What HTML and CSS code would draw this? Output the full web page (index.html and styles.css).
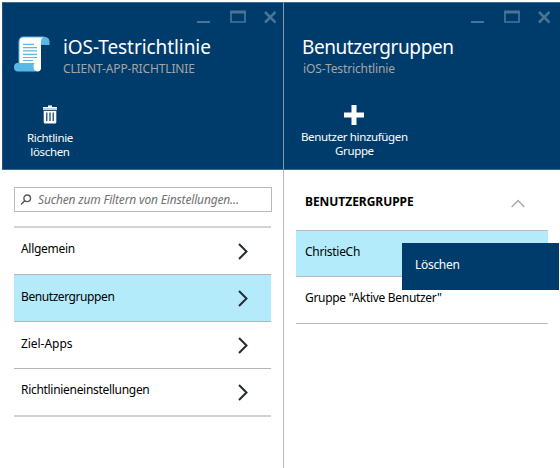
FILE: index.html
```html
<!DOCTYPE html>
<html lang="de">
<head>
<meta charset="utf-8">
<title>iOS-Testrichtlinie</title>
<link rel="stylesheet" href="styles.css">
</head>
<body>
<main class="blades">
  <section class="blade blade-policy">
    <header class="head">
      <div class="controls">
        <svg width="79" height="14" viewBox="0 0 79 14"><path d="M0 12h13" stroke-width="2"/><path d="M34 2.2h14v9.8h-14z" stroke-width="1.7"/><path d="M33.2 2h15.6" stroke-width="3"/><path d="M68 2l10.500 10.500M78.500 2l-10.500 10.500" stroke-width="2.500"/></svg>
      </div>
      <div class="identity">
        <svg class="scroll" width="36" height="36" viewBox="0 0 36 36">
          <path d="M9 1h21c4 0 5.500 2 5.500 5v3h-7L10 6z" fill="#59b9e6"/>
          <path d="M5 27V6c0-3.500 1.500-5 4.500-5H30c-2.200.7-3 2.500-3 5v25c0 3-1.500 4.500-3.500 4.500L18 29z" fill="#fff"/>
          <path d="M5 27V6c0-3.500 1.500-5 4.500-5H30" fill="none" stroke="#59b9e6" stroke-width="1"/>
          <path d="M3.500 27H21c-1.500 1-1.700 2.500-1.200 4 .5 2.700 2 4.200 4 4.500H4C1.200 35.500 0 33.500 0 31.200S1.200 27 3.500 27z" fill="#59b9e6"/>
          <circle cx="23.300" cy="31.500" r="3.700" fill="#fff"/>
          <path d="M9 8.300h11M9 11.700h14M9 14.900h14M9 18.300h14M9 21.500h14M9 24.500h10" stroke="#59b9e6" stroke-width="1.200"/>
        </svg>
        <div>
          <h1 class="title title-policy">iOS-Testrichtlinie</h1>
          <p class="subtitle sub-policy">CLIENT-APP-RICHTLINIE</p>
        </div>
      </div>
      <div class="command">
        <svg width="14" height="19" viewBox="0 0 14 19"><path d="M5 1.200h4" stroke="#fff" stroke-width="1.500"/><path d="M0 2h14v3.200H0z" fill="#c3d0dc"/><path d="M0 2.500h14" stroke="#fff"/><path d="M.7 6h12.600v11.200q0 1.300-1.300 1.300H2q-1.300 0-1.300-1.300z" fill="#fff"/><path d="M3.800 7.500v8.500M7 7.500v8.500M10.200 7.500v8.500" stroke="#003c6b" stroke-width="1.200"/></svg>
        <span class="command-label">Richtlinie<br>löschen</span>
      </div>
    </header>
    <div class="search">
      <svg width="12" height="12" viewBox="0 0 12 12"><circle cx="7.200" cy="4.300" r="3.300"/><path d="M4.700 6.700L1 10.500"/></svg>
      <span class="placeholder">Suchen zum Filtern von Einstellungen...</span>
    </div>
    <ul class="settings">
      <li><span class="general">Allgemein</span><svg width="10" height="17" viewBox="0 0 10 17"><path d="M1 1l7.500 7.500L1 16"/></svg></li>
      <li class="selected"><span class="user-groups">Benutzergruppen</span><svg width="10" height="17" viewBox="0 0 10 17"><path d="M1 1l7.500 7.500L1 16"/></svg></li>
      <li><span class="target-apps">Ziel-Apps</span><svg width="10" height="17" viewBox="0 0 10 17"><path d="M1 1l7.500 7.500L1 16"/></svg></li>
      <li class="last"><span>Richtlinieneinstellungen</span><svg width="10" height="17" viewBox="0 0 10 17"><path d="M1 1l7.500 7.500L1 16"/></svg></li>
    </ul>
  </section>
  <section class="blade blade-groups">
    <header class="head">
      <div class="controls">
        <svg width="79" height="14" viewBox="0 0 79 14"><path d="M0 12h13" stroke-width="2"/><path d="M34 2.200h14v9.800h-14z" stroke-width="1.700"/><path d="M33.200 2h15.600" stroke-width="3"/><path d="M68 2l10.500 10.500M78.500 2l-10.500 10.500" stroke-width="2.500"/></svg>
      </div>
      <div class="identity">
        <div>
          <h2 class="title title-groups">Benutzergruppen</h2>
          <p class="subtitle sub-groups">iOS-Testrichtlinie</p>
        </div>
      </div>
      <div class="command">
        <svg width="20" height="20" viewBox="0 0 20 20"><path d="M10 0v20M0 10h20" stroke="#fff" stroke-width="5"/></svg>
        <span class="command-label">Benutzer hinzufügen<br>Gruppe</span>
      </div>
    </header>
    <div class="group-heading">
      <span>BENUTZERGRUPPE</span>
      <svg width="14" height="9" viewBox="0 0 14 9"><path d="M.7 8L7 1.500 13.300 8"/></svg>
    </div>
    <ul class="groups">
      <li class="selected"><span>ChristieCh</span><div class="menu">Löschen</div></li>
      <li><span>Gruppe "Aktive Benutzer"</span></li>
    </ul>
  </section>
</main>
</body>
</html>
```
FILE: styles.css
```css
* { box-sizing: border-box; }
body {
  margin: 0;
  background: #fff;
  color: #000;
  font: 12px/16px "Noto Sans", "Open Sans", sans-serif;
}
h1, h2, p, ul { margin: 0; padding: 0; }
ul { list-style: none; }
svg { display: block; flex: none; }
.blades {
  display: grid;
  grid-template-columns: 282px 276px;
  width: 560px;
  height: 468px;
  padding: 2px 0 0 2px;
  overflow: hidden;
}
.blade-policy { border-right: 1px solid #b9bbbd; }
.head {
  height: 168px;
  background: #003c6b;
  border-top: 1px solid #3d6b92;
  border-bottom: 1px solid #3d6b92;
}
.blade-policy .head {
  border-left: 1px solid #24557e;
  width: 282px;
  border-right: 1px solid #8299b0;
}
.controls {
  display: flex;
  justify-content: flex-end;
  height: 31px;
  padding: 7px 7px 0 0;
}
.blade-groups .controls { padding-right: 10px; }
.controls svg { fill: none; stroke: #4b7396; }
.identity {
  display: flex;
  height: 54px;
  padding-left: 11px;
}
.blade-groups .identity { padding-left: 18px; }
.scroll { margin: 2px 13px 0 0; }
.title {
  height: 27px;
  color: #fff;
  font-size: 19px;
  font-weight: 400;
  line-height: 26px;
  white-space: nowrap;
}
.title-policy { letter-spacing: -0.07px; }
.title-groups { letter-spacing: -0.42px; }
.subtitle { color: #a5a5a5; white-space: nowrap; }
.sub-policy { letter-spacing: -0.14px; }
.sub-groups { padding-left: 1px; letter-spacing: -0.12px; }
.command {
  display: flex;
  flex-direction: column;
  align-items: center;
  width: max-content;
  margin: 17px 0 0 24px;
  color: #fff;
  font-size: 11.5px;
  line-height: 14px;
  text-align: center;
}
.blade-groups .command { margin: 17px 0 0 17px; }
.command-label {
  margin-top: 7px;
  letter-spacing: -0.35px;
  white-space: nowrap;
}
.blade-groups .command-label { margin-top: 5px; }
.search {
  display: flex;
  align-items: center;
  width: 258px;
  height: 25px;
  margin: 17px 0 14px 12px;
  padding-left: 5px;
  border: 1px solid #b9bcbf;
}
.search svg { fill: none; stroke: #555; stroke-width: 1.4; }
.placeholder {
  margin-left: 6px;
  color: #707070;
  font-style: italic;
  letter-spacing: -0.16px;
  white-space: nowrap;
}
.settings {
  width: 257px;
  margin-left: 12px;
  border-top: 2px solid #d2d2d2;
}
.settings li {
  display: flex;
  justify-content: space-between;
  height: 47px;
  padding: 13px 23px 0 7px;
  border-bottom: 1px solid #b2b5b8;
  letter-spacing: -0.3px;
}
.settings svg {
  margin-top: 2px;
  fill: none;
  stroke: #252b30;
  stroke-width: 2;
}
.settings .selected { background: #b3ebfb; }
.settings .last { height: 48px; border-bottom: 2px solid #d2d2d2; }
.user-groups { padding-top: 1px; letter-spacing: -0.42px; }
.target-apps { padding-top: 1px; letter-spacing: -0.05px; }
.group-heading {
  display: flex;
  justify-content: space-between;
  height: 60px;
  margin-left: 12px;
  padding: 24px 35px 0 9px;
  font-weight: 700;
  letter-spacing: -0.04px;
}
.group-heading svg {
  margin-top: 5px;
  fill: none;
  stroke: #aaa;
  stroke-width: 1.5;
}
.groups {
  width: 252px;
  margin-left: 12px;
  border-top: 1px solid #b9bcbf;
  letter-spacing: -0.3px;
}
.groups li {
  position: relative;
  height: 46px;
  padding: 13px 0 0 9px;
  border-bottom: 1px solid #b9bcbf;
}
.groups li:last-child { height: 47px; }
.groups .selected { background: #b3ebfb; }
.menu {
  position: absolute;
  z-index: 1;
  top: 12px;
  left: 106px;
  width: 157px;
  height: 47px;
  padding: 14px 0 0 13px;
  background: #003c6b;
  color: #fff;
}
```
